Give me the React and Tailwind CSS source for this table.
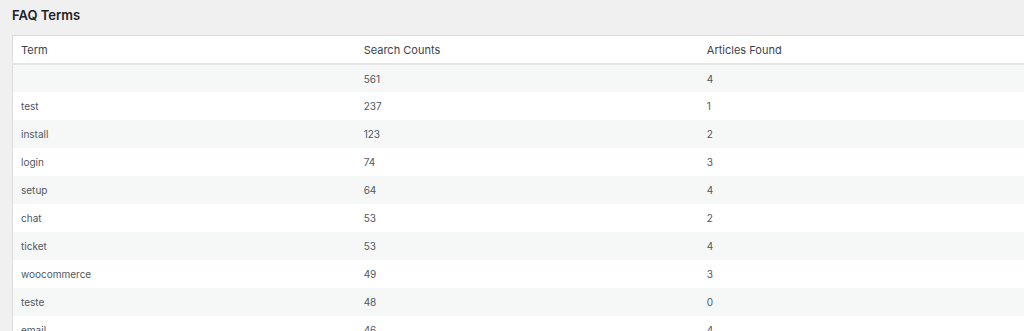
const rows = [
  ["", 561, 4],
  ["test", 237, 1],
  ["install", 123, 2],
  ["login", 74, 3],
  ["setup", 64, 4],
  ["chat", 53, 2],
  ["ticket", 53, 4],
  ["woocommerce", 49, 3],
  ["teste", 48, 0],
  ["email", 46, 4],
];

export default function App() {
  return (
    <div className="h-[331px] overflow-hidden bg-[#f0f0f1] pl-3 font-['Inter',sans-serif]">
      <h2 className="pt-[7px] pb-[12px] text-[13px] leading-[16px] font-semibold text-[#1d2327]">
        FAQ Terms
      </h2>
      <table className="w-[1030px] table-fixed border-collapse border-t border-l border-[#dcdcde] bg-white text-left">
        <thead>
          <tr className="h-[28px] border-b-2 border-[#e5e5e5]">
            <th className="px-[8px] pt-[2px] text-[11px] font-normal text-[#3c434a]">Term</th>
            <th className="px-[8px] pt-[2px] text-[11px] font-normal text-[#3c434a]">Search Counts</th>
            <th className="px-[8px] pt-[2px] text-[11px] font-normal text-[#3c434a]">Articles Found</th>
          </tr>
        </thead>
        <tbody>
          {rows.map(([term, count, found], i) => (
            <tr key={i} className={i % 2 === 0 ? "h-[28px] bg-[#f6f7f7]" : "h-[28px] bg-white"}>
              <td className="px-[8px] pt-[2px] text-[10px] text-[#50575e]">{term}</td>
              <td className="px-[8px] pt-[2px] text-[10px] text-[#50575e]">{count}</td>
              <td className="px-[8px] pt-[2px] text-[10px] text-[#50575e]">{found}</td>
            </tr>
          ))}
        </tbody>
      </table>
    </div>
  );
}
